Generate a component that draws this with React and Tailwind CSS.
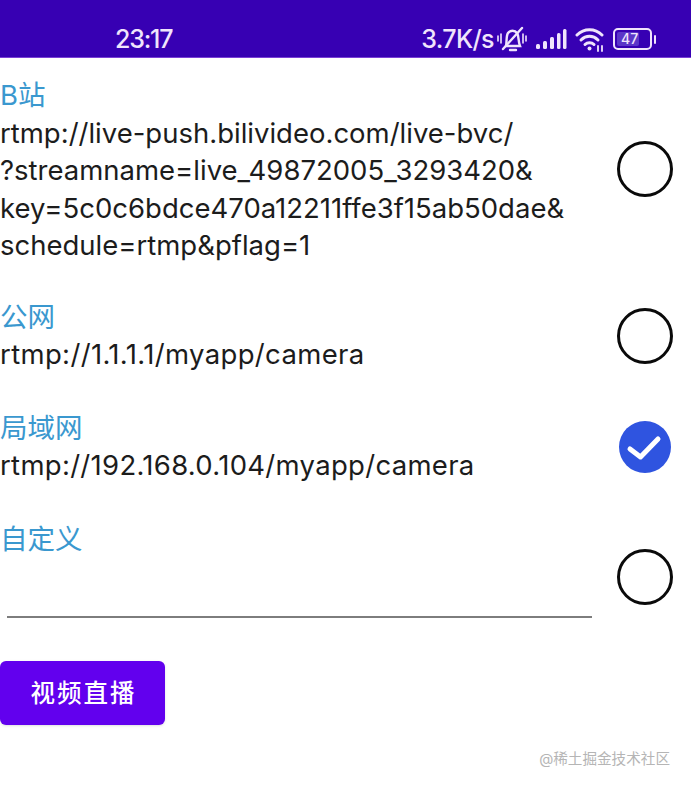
import React from 'react';

const font = "font-['Inter','Noto_Sans_CJK_SC',sans-serif]";

const Radio = ({ checked }) => {
  if (checked) {
    return (
      <svg width="56" height="56" viewBox="0 0 56 56" className="shrink-0">
        <circle cx="28" cy="28" r="26" fill="#2f54e0" />
        <path d="M13 30 L23.5 38 L41 20" fill="none" stroke="#fff" strokeWidth="5" strokeLinecap="round" strokeLinejoin="round" />
      </svg>
    );
  }
  return <div className="w-14 h-14 shrink-0 rounded-full border-[3px] border-[#0a0a0a] bg-white" />;
};

const Row = ({ label, lines, checked, children, className = '', radioClass = '', lineClass = '' }) => (
  <div className={`flex items-center ${className}`}>
    <div className="flex-1 min-w-0">
      <div className="text-[27.5px] leading-[37.5px] text-[#3a98cf]">{label}</div>
      {lines && lines.map((l) => (
        <div key={l} className={`text-[27.5px] leading-[37.5px] text-[#1c1c1c] whitespace-nowrap ${lineClass}`}>{l}</div>
      ))}
      {children}
    </div>
    <div className={`w-[92px] flex justify-center px-[18px] ${radioClass}`}>
      <Radio checked={checked} />
    </div>
  </div>
);

const StatusBar = () => (
  <div className="h-[58px] bg-[#3700b3] border-b border-[#7a3fd6] flex items-end pb-[2px] text-[#f0e4fc]">
    <span className="ml-[115px] text-[25px] leading-[32px] tracking-[-1.2px] font-medium">23:17</span>
    <div className="ml-auto mr-[35px] flex items-center h-[32px]">
      <span className="text-[25px] leading-[32px] font-medium tracking-[-0.6px]">3.7K/s</span>
      {/* muted bell */}
      <svg width="30" height="28" viewBox="0 0 30 28" className="ml-[3px]" fill="none" stroke="#f0e4fc" strokeWidth="2.4" strokeLinecap="round">
        <path d="M9 21 C10 16 9 11 11 8 C13 5 18 5 20 8 C22 11 21 16 23 21 Z" />
        <path d="M13 25 H19" />
        <path d="M6 24 L25 3" />
        <path d="M1 11 V16 M4 9 V18 M26 9 V18 M29 11 V16" strokeWidth="1.6" />
      </svg>
      {/* signal */}
      <svg width="32" height="24" viewBox="0 0 32 24" className="ml-[8px]" fill="#f0e4fc">
        <rect x="1" y="17" width="4" height="5" rx="1.5" />
        <rect x="8" y="14" width="4" height="8" rx="1.5" />
        <rect x="15" y="10" width="4" height="12" rx="1.5" />
        <rect x="22" y="6" width="3.5" height="16" rx="1.5" />
        <rect x="28" y="2" width="3.5" height="20" rx="1.5" />
      </svg>
      {/* wifi */}
      <svg width="30" height="26" viewBox="0 0 30 26" className="ml-[8px]" fill="none" stroke="#f0e4fc" strokeWidth="3" strokeLinecap="round">
        <path d="M2 9 C9 2 20 2 27 9" />
        <path d="M6 14 C11 9 18 9 23 14" />
        <path d="M10 18.5 C12.5 16 16.5 16 19 18.5" />
        <circle cx="14.5" cy="22.5" r="2" fill="#f0e4fc" stroke="none" />
        <path d="M23 20 V25 M27 20 V25" strokeWidth="1.8" />
      </svg>
      {/* battery */}
      <div className="ml-[8px] w-[39px] h-[22px] rounded-[5px] border-2 border-[#f0e4fc] p-[2px] flex">
        <div className="w-[22px] bg-[#5b35c8] rounded-[2px] flex items-center justify-start">
          <span className="text-[14px] leading-none font-medium pl-[4px]">47</span>
        </div>
      </div>
      <div className="ml-[2px] w-[2px] h-[9px] rounded-full bg-[#f0e4fc]" />
    </div>
  </div>
);

export default function App() {
  return (
    <div className={`w-[691px] h-[788px] bg-white overflow-hidden flex flex-col ${font}`}>
      <StatusBar />
      <div className="pt-[19px] flex flex-col">
        <Row
          label="B站"
          radioClass="pb-[4px]"
          lines={[
            'rtmp://live-push.bilivideo.com/live-bvc/',
            '?streamname=live_49872005_3293420&',
            'key=5c0c6bdce470a12211ffe3f15ab50dae&',
            'schedule=rtmp&pflag=1',
          ]}
        />
        <Row className="mt-[34px]" label="公网" lineClass="tracking-[0.35px]" lines={['rtmp://1.1.1.1/myapp/camera']} />
        <Row className="mt-[36px]" label="局域网" lineClass="tracking-[0.3px]" lines={['rtmp://192.168.0.104/myapp/camera']} checked />
        <Row className="mt-[36px]" label="自定义" radioClass="pt-[16px]">
          <div className="h-[60px] mx-[7px] border-b-2 border-[#7d7d7d]" />
        </Row>
        <button className="mt-[43px] w-[165px] h-[64px] rounded-[6px] bg-[#6200ee] text-white text-[24.5px] font-medium tracking-[2px] pl-[2px] shadow-sm">
          视频直播
        </button>
      </div>
      <div className="mt-[25px] pr-[21px] text-right text-[14.6px] leading-[18px] text-[#b5b5b5]">@稀土掘金技术社区</div>
    </div>
  );
}
